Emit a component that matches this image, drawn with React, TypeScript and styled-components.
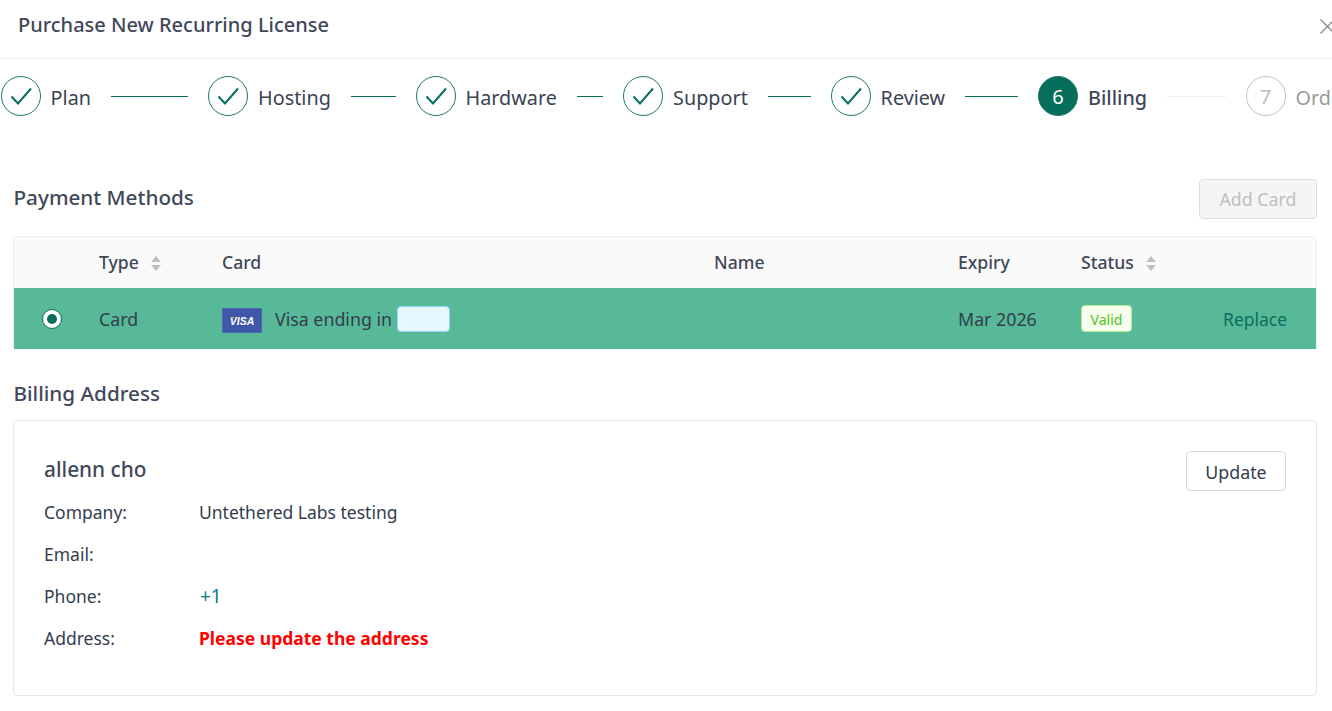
import React from "react";
import styled, { createGlobalStyle } from "styled-components";

const Global = createGlobalStyle`
  html, body { margin: 0; padding: 0; background: #fff; }
  body { width: 1332px; height: 711px; overflow: hidden; font-family: "Noto Sans", "Open Sans", sans-serif; color: #333d4d; }
  * { box-sizing: border-box; }
`;
const Page = styled.div`width: 1332px; height: 711px; overflow: hidden; display: flex; flex-direction: column;`;
const Header = styled.header`
  height: 59px; flex: none; border-bottom: 1px solid #eeeeee; padding: 0 0 0 18px;
  display: flex; align-items: center; justify-content: space-between; overflow: hidden;
`;
const Title = styled.h1`margin: 0 0 8px; font-size: 20px; font-weight: 500; line-height: 32px; color: #3f4859;`;
const Close = styled.button`
  border: 0; background: none; padding: 0; margin: 0 -3px 6px 0; width: 15px; height: 15px; flex: none; color: #8c8c8c; display: block;
`;
const Steps = styled.nav`
  flex: none; margin-top: 17px; padding-left: 0.6px; width: 1500px; height: 40px;
  display: grid; grid-template-columns: repeat(6, 207.5px) auto; justify-content: start;
`;
const Step = styled.div`display: flex; align-items: center; min-width: 0;`;
const Circle = styled.span<{ $state: "done" | "active" | "todo" }>`
  width: 40px; height: 40px; border-radius: 50%; flex: none; display: flex; align-items: center; justify-content: center;
  font-size: 20px; line-height: 1;
  border: 1px solid ${(p) => (p.$state === "todo" ? "#c4c4c4" : "#1f7a69")};
  background: ${(p) => (p.$state === "active" ? "#076e5c" : "#fff")};
  color: ${(p) => (p.$state === "active" ? "#fff" : p.$state === "todo" ? "#bdbdbd" : "#076e5c")};
`;
const Digit = styled.span`margin-top: 2px;`;
const StepLabel = styled.span<{ $state: "done" | "active" | "todo" }>`
  margin: 4px 0 0 10px; font-size: 19.8px; line-height: 32px; white-space: nowrap;
  font-weight: ${(p) => (p.$state === "active" ? 500 : 400)};
  color: ${(p) => (p.$state === "todo" ? "#9a9a9a" : p.$state === "active" ? "#3f4859" : "#3a4352")};
`;
const Line = styled.span<{ $done: boolean }>`
  flex: 1; height: 1px; margin: 0 20px -1px; min-width: 0;
  background: ${(p) => (p.$done ? "#076e5c" : "#eeeeee")};
`;
const Main = styled.main`flex: 1; padding: 0 15px 0 13px; display: flex; flex-direction: column;`;
const SectionHead = styled.div`
  display: flex; align-items: center; justify-content: space-between; height: 40px; margin-top: 63px; margin-bottom: 17px;
`;
const SectionTitle = styled.h2<{ $lift?: boolean }>`
  margin: 0 0 ${(p) => (p.$lift ? "4px" : "0")}; font-size: 20.7px; line-height: 32px; font-weight: 500; color: #3f4859; padding-left: 0.5px;
`;
const Disabled = styled.button`
  width: 118px; height: 40px; border: 1px solid #dedede; border-radius: 4px; background: #f5f5f5; color: #bfbfbf;
  font: 400 17.8px/1 "Noto Sans", sans-serif; padding: 2px 0 0;
`;
const Table = styled.section`border: 1px solid #f0f0f0; border-bottom: 0; border-radius: 4px 4px 0 0; overflow: hidden;`;
const Row = styled.div<{ $head?: boolean }>`
  display: grid; grid-template-columns: 69px 123px 492px 244px 123px 123px 1fr; align-items: center;
  height: ${(p) => (p.$head ? "51px" : "61px")};
  padding-bottom: ${(p) => (p.$head ? "2px" : "0")};
  background: ${(p) => (p.$head ? "#fafafa" : "#57b997")};
  font-size: ${(p) => (p.$head ? "17.6px" : "17.8px")}; color: ${(p) => (p.$head ? "#3f4859" : "#333d4d")};
  font-weight: ${(p) => (p.$head ? 500 : 400)};
`;
const Cell = styled.div`padding-left: 16px; display: flex; align-items: center; white-space: nowrap; min-width: 0;`;
const RadioCell = styled(Cell)`padding-left: 28px;`;
const Radio = styled.span`
  width: 20px; height: 20px; border-radius: 50%; background: #fff; border: 1px solid #076e5c;
  display: flex; align-items: center; justify-content: center;
  &::after { content: ""; width: 10px; height: 10px; border-radius: 50%; background: #076e5c; }
`;
const Sorter = styled.svg`width: 10px; height: 15px; margin-left: 12px; margin-top: 4px; flex: none;`;
const VisaBadge = styled.span`
  position: relative; width: 40px; height: 25px; background: #3f57a8; border: 1px solid #4a6ab0; border-radius: 1px; color: #fff;
  display: flex; align-items: center; justify-content: center;
  font: italic 700 10.5px/1 "Liberation Sans", sans-serif; margin: 4px 13px 0 0; flex: none; padding-top: 1px;
  &::before { content: ""; position: absolute; left: 8px; top: 8px; width: 3px; height: 1px; background: #f0a63a; }
`;
const Mask = styled.span`
  width: 53px; height: 26px; margin-left: 5px; background: #e6f7ff; border: 1px solid #91d5ff; border-radius: 4px; flex: none;
`;
const Tag = styled.span`
  width: 51px; height: 27px; background: #f6ffed; border: 1px solid #b7eb8f; border-radius: 4px; color: #52c41a;
  font-size: 14px; display: flex; align-items: center; justify-content: center; padding-top: 1px;
`;
const ActionCell = styled(Cell)`padding-left: 35px;`;
const Replace = styled.a`color: #0b6e5c; font-size: 17.5px;`;
const AddressHead = styled.div`height: 32px; margin-top: 28px; margin-bottom: 11px; display: flex; align-items: center;`;
const AddressCard = styled.section`
  height: 276px; border: 1px solid #e8e8e8; border-radius: 4px; padding: 30px 30px 0; display: flex; justify-content: space-between; align-items: flex-start;
`;
const Info = styled.div`display: flex; flex-direction: column;`;
const Person = styled.h3`margin: 0 0 4px; font-size: 20.8px; line-height: 36px; font-weight: 500; color: #3f4859;`;
const InfoRow = styled.div`display: grid; grid-template-columns: 155px auto; height: 42px; align-items: center; font-size: 17.5px; line-height: 26px; color: #333d4d;`;
const Phone = styled.span`color: #0a7f86; font-size: 19px; margin-left: 1px;`;
const Warn = styled.span`color: #ff0000; font-weight: 700;`;
const Update = styled.button`
  width: 100px; height: 40px; background: #fff; border: 1px solid #d9d9d9; border-radius: 4px; color: #333d4d;
  font: 400 17.8px/1 "Noto Sans", sans-serif; padding: 3px 0 0;
`;

const Check = () => (
  <svg width="26" height="26" viewBox="0 0 26 26" fill="none" stroke="#076e5c" strokeWidth="2">
    <path d="M3.5 13.5 L10 20.5 L23 5.5" />
  </svg>
);
const SortIcon = () => (
  <Sorter viewBox="0 0 10 15" fill="#bfbfbf">
    <path d="M5 0 L10 6 H0 Z M0 9 H10 L5 15 Z" />
  </Sorter>
);

const steps = ["Plan", "Hosting", "Hardware", "Support", "Review", "Billing", "Order"];

export default function App() {
  return (
    <Page>
      <Global />
      <Header>
        <Title>Purchase New Recurring License</Title>
        <Close aria-label="Close">
          <svg width="15" height="15" viewBox="0 0 15 15" stroke="currentColor" strokeWidth="1.4" fill="none">
            <path d="M0.5 0.5 L14.5 14.5 M14.5 0.5 L0.5 14.5" />
          </svg>
        </Close>
      </Header>
      <Steps>
        {steps.map((s, i) => {
          const state = i < 5 ? "done" : i === 5 ? "active" : "todo";
          return (
            <Step key={s}>
              <Circle $state={state}>{state === "done" ? <Check /> : <Digit>{i + 1}</Digit>}</Circle>
              <StepLabel $state={state}>{s}</StepLabel>
              {i < 6 && <Line $done={i < 5} />}
            </Step>
          );
        })}
      </Steps>
      <Main>
        <SectionHead>
          <SectionTitle $lift>Payment Methods</SectionTitle>
          <Disabled disabled>Add Card</Disabled>
        </SectionHead>
        <Table>
          <Row $head>
            <Cell />
            <Cell>Type<SortIcon /></Cell>
            <Cell>Card</Cell>
            <Cell>Name</Cell>
            <Cell>Expiry</Cell>
            <Cell>Status<SortIcon /></Cell>
            <Cell />
          </Row>
          <Row>
            <RadioCell><Radio /></RadioCell>
            <Cell>Card</Cell>
            <Cell><VisaBadge>VISA</VisaBadge>Visa ending in<Mask /></Cell>
            <Cell />
            <Cell>Mar 2026</Cell>
            <Cell><Tag>Valid</Tag></Cell>
            <ActionCell><Replace>Replace</Replace></ActionCell>
          </Row>
        </Table>
        <AddressHead><SectionTitle>Billing Address</SectionTitle></AddressHead>
        <AddressCard>
          <Info>
            <Person>allenn cho</Person>
            <InfoRow><span>Company:</span><span>Untethered Labs testing</span></InfoRow>
            <InfoRow><span>Email:</span><span /></InfoRow>
            <InfoRow><span>Phone:</span><Phone>+1</Phone></InfoRow>
            <InfoRow><span>Address:</span><Warn>Please update the address</Warn></InfoRow>
          </Info>
          <Update>Update</Update>
        </AddressCard>
      </Main>
    </Page>
  );
}
